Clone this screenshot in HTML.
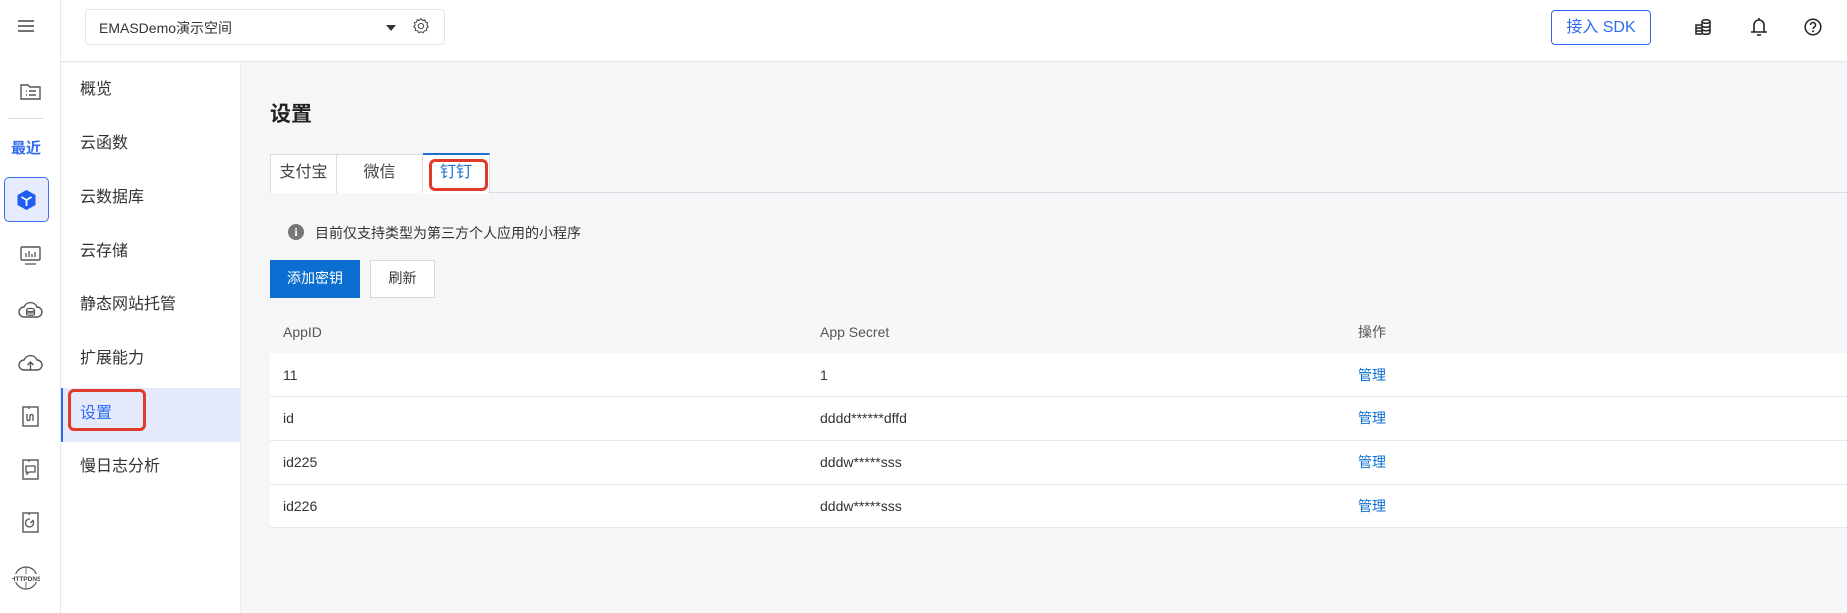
<!DOCTYPE html>
<html><head><meta charset="utf-8"><style>
*{box-sizing:border-box;margin:0;padding:0}
body{width:1847px;height:613px;overflow:hidden;background:#f5f6f8;font-family:"Liberation Sans","Noto Sans CJK SC",sans-serif;color:#333;position:relative}
.abs{position:absolute}
.ic{position:absolute;left:18px;width:25px;height:25px}
</style></head><body>
<div class="abs" style="left:0;top:0;width:61px;height:613px;background:#fff;border-right:1px solid #e5e7eb"></div>
<div class="abs" style="left:61px;top:0;width:1786px;height:62px;background:#fff;border-bottom:1px solid #e3e6ec"></div>
<div class="abs" style="left:61px;top:63px;width:180px;height:550px;background:#fff;border-right:1px solid #eceef2"></div>

<svg class="abs" style="left:17px;top:18px" width="18" height="16"><path d="M1 3h16M1 8h16M1 13h16" stroke="#444" stroke-width="1.6"/></svg>
<svg class="ic" style="top:79px" viewBox="0 0 25 25"><path d="M3 6h7l2 2h10v12H3z" fill="none" stroke="#555" stroke-width="1.4"/><path d="M8 12h1M8 16h1M11 12h7M11 16h7" stroke="#555" stroke-width="1.4"/></svg>
<div class="abs" style="left:8px;top:118px;width:36px;height:1px;background:#dde"></div>
<div class="abs" style="left:11px;top:137px;font-size:15px;color:#2f6bf0;font-weight:bold">最近</div>
<div class="abs" style="left:4px;top:177px;width:45px;height:45px;border:1.5px solid #3b6ff5;border-radius:5px;background:#e6ecfd"></div>
<svg class="abs" style="left:16px;top:189px" width="21" height="22" viewBox="0 0 21 22"><path d="M10.5 1l9 5v10l-9 5-9-5V6z" fill="#1f5cf2"/><path d="M10.5 11V17M10.5 11L5.5 8M10.5 11l5-3" stroke="#fff" stroke-width="1.8"/></svg>
<svg class="ic" style="top:243px" viewBox="0 0 25 25"><rect x="3" y="4" width="19" height="13" rx="1" fill="none" stroke="#555" stroke-width="1.4"/><path d="M8 14v-4M11 14V8M14 14v-3M17 14V9M7 21h11" stroke="#555" stroke-width="1.3"/></svg>
<svg class="ic" style="top:298px" viewBox="0 0 25 25"><path d="M6 19a5 5 0 0 1 0-10 7 7 0 0 1 13 0 5 5 0 0 1 0 10z" fill="none" stroke="#555" stroke-width="1.4"/><ellipse cx="12.5" cy="12" rx="4" ry="1.6" fill="none" stroke="#555" stroke-width="1.2"/><path d="M8.5 12v4.5c0 1 8 1 8 0V12M8.5 14.3c0 1 8 1 8 0" fill="none" stroke="#555" stroke-width="1.2"/></svg>
<svg class="ic" style="top:351px" viewBox="0 0 25 25"><path d="M6 19a5 5 0 0 1 0-10 7 7 0 0 1 13 0 5 5 0 0 1 0 10z" fill="none" stroke="#555" stroke-width="1.4"/><path d="M12.5 19v-8M9.5 14l3-3 3 3" fill="none" stroke="#555" stroke-width="1.4"/></svg>
<svg class="ic" style="top:404px" viewBox="0 0 25 25"><rect x="5" y="3" width="15" height="19" fill="none" stroke="#555" stroke-width="1.4"/><path d="M11 3v2M9 10v5c0 2 3 2 3 0v-3c0-2 3-2 3 0v5" fill="none" stroke="#555" stroke-width="1.3"/></svg>
<svg class="ic" style="top:457px" viewBox="0 0 25 25"><rect x="5" y="3" width="15" height="19" fill="none" stroke="#555" stroke-width="1.4"/><path d="M11 3v2M8 9h9v6h-6l-2 2v-2H8z" fill="none" stroke="#555" stroke-width="1.3"/></svg>
<svg class="ic" style="top:510px" viewBox="0 0 25 25"><rect x="5" y="3" width="15" height="19" fill="none" stroke="#555" stroke-width="1.4"/><path d="M11 3v2M15 11a4 4 0 1 1-3-2M12.5 13l3-3" fill="none" stroke="#555" stroke-width="1.3"/></svg>
<svg class="abs" style="left:12px;top:565px" width="28" height="26" viewBox="0 0 28 26"><circle cx="14" cy="13" r="11" fill="none" stroke="#555" stroke-width="1.2"/><path d="M14 2v22M3 13h22" stroke="#555" stroke-width="0.8"/><rect x="1" y="9" width="26" height="8" fill="#fff"/><text x="14" y="16" font-size="6.5" font-weight="bold" text-anchor="middle" fill="#444" font-family="Liberation Sans">HTTPDNS</text></svg>

<div class="abs" style="left:85px;top:9px;width:360px;height:36px;border:1px solid #e3e5ea;border-radius:4px;background:#fff"></div>
<div class="abs" style="left:99px;top:18px;font-size:14px;color:#333">EMASDemo演示空间</div>
<div class="abs" style="left:386px;top:25px;width:0;height:0;border-left:5px solid transparent;border-right:5px solid transparent;border-top:6px solid #333"></div>
<svg class="abs" style="left:412px;top:17px" width="18" height="18" viewBox="0 0 24 24"><path d="M12 2l2 2.5 3-.8.8 3 3 1-1 3 1.9 2.3-2.4 1.9.3 3.1-3.1.3-1.5 2.7-2.9-1.4L9 21l-1.5-2.7-3.1-.3.3-3.1L2.3 13l1.9-2.3-1-3 3-1 .8-3 3 .8z" fill="none" stroke="#555" stroke-width="1.5"/><circle cx="12" cy="12" r="3.5" fill="none" stroke="#555" stroke-width="1.5"/></svg>
<div class="abs" style="left:1551px;top:10px;width:100px;height:35px;border:1px solid #2f6bf0;border-radius:4px;color:#2f6bf0;font-size:16px;text-align:center;line-height:33px">接入 SDK</div>
<svg class="abs" style="left:1694px;top:18px" width="18" height="18" viewBox="0 0 18 18"><g fill="none" stroke="#222" stroke-width="1.5"><ellipse cx="12" cy="3.5" rx="4" ry="1.8"/><path d="M8 3.5v11c0 2.3 8 2.3 8 0v-11M8 7.5c0 2.3 8 2.3 8 0M8 11c0 2.3 8 2.3 8 0"/><path d="M8 7H2v9h6M2 10h6M2 13h6"/></g></svg>
<svg class="abs" style="left:1750px;top:17px" width="18" height="20" viewBox="0 0 18 20"><path d="M4 15V8a5 5 0 0 1 10 0v7M1 15h16M7 18h4M9 1v2" fill="none" stroke="#222" stroke-width="1.6"/></svg>
<svg class="abs" style="left:1804px;top:18px" width="18" height="18" viewBox="0 0 18 18"><circle cx="9" cy="9" r="7.8" fill="none" stroke="#222" stroke-width="1.5"/><path d="M6.5 7a2.5 2.5 0 1 1 3.5 2.3c-.7.4-1 .8-1 1.7" fill="none" stroke="#222" stroke-width="1.5"/><circle cx="9" cy="13.3" r="1" fill="#222"/></svg>

<div class="abs" style="left:61px;top:388px;width:179px;height:54px;background:#e4e9fb;border-left:2px solid #2f6bf0"></div>
<div class="abs" style="left:80px;top:0;font-size:16px;color:#333;line-height:16px">
<div class="abs" style="top:82px;white-space:nowrap">概览</div>
<div class="abs" style="top:136px;white-space:nowrap">云函数</div>
<div class="abs" style="top:190px;white-space:nowrap">云数据库</div>
<div class="abs" style="top:244px;white-space:nowrap">云存储</div>
<div class="abs" style="top:297px;white-space:nowrap">静态网站托管</div>
<div class="abs" style="top:351px;white-space:nowrap">扩展能力</div>
<div class="abs" style="top:406px;white-space:nowrap;color:#2f6bf0">设置</div>
<div class="abs" style="top:459px;white-space:nowrap">慢日志分析</div>
</div>
<div class="abs" style="left:68px;top:389px;width:78px;height:42px;border:3px solid #e03a2a;border-radius:6px"></div>

<div class="abs" style="left:270px;top:98px;font-size:21px;font-weight:bold;color:#222">设置</div>
<div class="abs" style="left:270px;top:192px;width:1577px;height:1px;background:#d8dbe0"></div>
<div class="abs" style="left:270px;top:154px;width:67px;height:39px;background:#fff;border:1px solid #d8dbe0;border-bottom:none;font-size:16px;text-align:center;line-height:36px;color:#444">支付宝</div>
<div class="abs" style="left:336px;top:154px;width:87px;height:39px;background:#fff;border:1px solid #d8dbe0;border-bottom:none;font-size:16px;text-align:center;line-height:36px;color:#444">微信</div>
<div class="abs" style="left:423px;top:153px;width:67px;height:41px;background:#fff;border-top:2px solid #1f6fd0;border-right:1px solid #d8dbe0;font-size:16px;text-align:center;line-height:36px;color:#1f6fd0">钉钉</div>
<div class="abs" style="left:429px;top:159px;width:59px;height:32px;border:3px solid #e03a2a;border-radius:6px"></div>

<div class="abs" style="left:288px;top:224px;width:16px;height:16px;border-radius:50%;background:#777;color:#fff;font-size:12px;font-weight:bold;text-align:center;line-height:16px;font-family:'Liberation Serif',serif">i</div>
<div class="abs" style="left:315px;top:223px;font-size:14px;color:#333">目前仅支持类型为第三方个人应用的小程序</div>

<div class="abs" style="left:270px;top:260px;width:90px;height:38px;background:#0a6fd0;color:#fff;font-size:14px;text-align:center;line-height:36px">添加密钥</div>
<div class="abs" style="left:370px;top:260px;width:65px;height:38px;background:#fff;border:1px solid #d5d8dd;font-size:14px;text-align:center;line-height:34px">刷新</div>

<div class="abs" style="left:270px;top:310px;width:1577px;height:43px;background:#f7f7f9"></div>
<div class="abs" style="left:270px;top:353px;width:1577px;height:175px;background:#fff"></div>
<div class="abs" style="left:270px;top:396px;width:1577px;height:1px;background:#e8e9ec"></div>
<div class="abs" style="left:270px;top:440px;width:1577px;height:1px;background:#e8e9ec"></div>
<div class="abs" style="left:270px;top:484px;width:1577px;height:1px;background:#e8e9ec"></div>
<div class="abs" style="left:270px;top:527px;width:1577px;height:1px;background:#e8e9ec"></div>
<div class="abs" style="left:283px;top:0;font-size:14px;color:#333">
<div class="abs" style="top:324px;color:#555">AppID</div><div class="abs" style="top:367px">11</div><div class="abs" style="top:410px">id</div><div class="abs" style="top:454px">id225</div><div class="abs" style="top:498px">id226</div>
</div>
<div class="abs" style="left:820px;top:0;font-size:14px;color:#333;white-space:nowrap">
<div class="abs" style="top:324px;color:#555">App Secret</div><div class="abs" style="top:367px">1</div><div class="abs" style="top:410px">dddd******dffd</div><div class="abs" style="top:454px">dddw*****sss</div><div class="abs" style="top:498px">dddw*****sss</div>
</div>
<div class="abs" style="left:1358px;top:0;font-size:14px;color:#0a6fd0;white-space:nowrap">
<div class="abs" style="top:322px;color:#555">操作</div><div class="abs" style="top:365px">管理</div><div class="abs" style="top:408px">管理</div><div class="abs" style="top:452px">管理</div><div class="abs" style="top:496px">管理</div>
</div>
</body></html>
